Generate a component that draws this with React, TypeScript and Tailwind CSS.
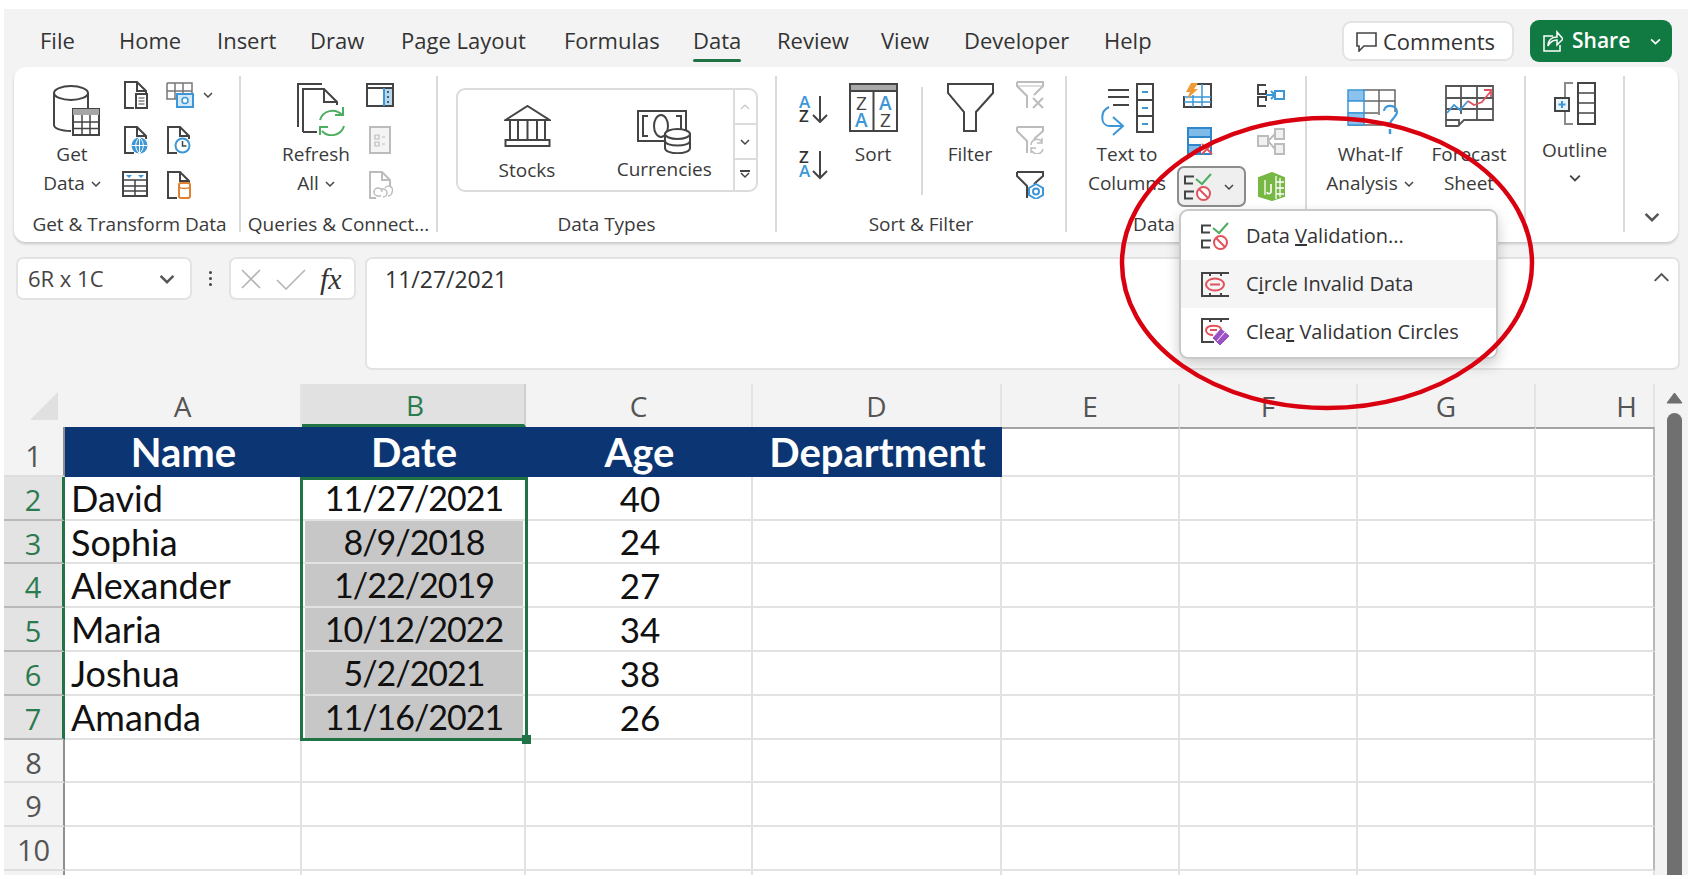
import React from 'react';

const DARK = '#444444';
const BLUE = '#3d96d6';
const GRAY = '#bcbcbc';
const RED = '#e2525c';
const GREEN = '#4cae5f';
const UI = "font-['Open_Sans',sans-serif]";

function Ico({ w, h, children, stroke = DARK, sw = 2 }: { w: number; h: number; children: React.ReactNode; stroke?: string; sw?: number }) {
  return (
    <svg width={w} height={h} viewBox={`0 0 ${w} ${h}`} fill="none" stroke={stroke} strokeWidth={sw} className="shrink-0">
      {children}
    </svg>
  );
}

function Chevron({ size = 10, color = '#444', up = false }: { size?: number; color?: string; up?: boolean }) {
  return (
    <svg width={size} height={size} viewBox="0 0 10 10" fill="none" stroke={color} strokeWidth={up ? 1.2 : 1.5} className="shrink-0">
      <path d={up ? 'M1 7l4-4 4 4' : 'M1 3l4 4 4-4'} />
    </svg>
  );
}

const DocBase = ({ c = DARK }: { c?: string }) => (
  <>
    <path d="M11 27H2V1h12l9 9v3" stroke={c} />
    <path d="M14 1v9h9" stroke={c} />
  </>
);

const GetDataIcon = () => (
  <Ico w={48} h={52}>
    <ellipse cx="19" cy="9" rx="17" ry="7" />
    <path d="M2 9v32c0 3 6 6 17 6M36 9v15" />
    <rect x="21" y="25" width="26" height="26" fill="#fff" />
    <rect x="21" y="25" width="26" height="6" fill="#a6a6a6" stroke="none" />
    <path d="M21 38h26M21 44.500h26M30 31v20M38 31v20" strokeWidth="1.500" />
  </Ico>
);
const FromTextIcon = () => (
  <Ico w={25} h={28}>
    <DocBase />
    <rect x="13" y="13" width="11" height="14" fill="#fff" />
    <path d="M15.500 17h6M15.500 20h6M15.500 23h6" strokeWidth="1.200" />
  </Ico>
);
const PictureIcon = () => (
  <Ico w={28} h={26} stroke="#777" sw={1.5}>
    <path d="M1 1h25v10M1 1v16h9M1 9h25M9 1v16M17 1v10" />
    <rect x="11" y="12" width="16" height="13" stroke={BLUE} fill="#d5e9f7" strokeWidth="2" />
    <circle cx="19" cy="18.500" r="3" stroke={BLUE} fill="#fff" strokeWidth="1.500" />
  </Ico>
);
const WebIcon = () => (
  <Ico w={25} h={28}>
    <DocBase />
    <circle cx="16.500" cy="19.500" r="8" fill={BLUE} stroke="none" />
    <path d="M8.500 19.500h16M16.500 11.500v16M16.500 11.500c-5 4-5 12 0 16M16.500 11.500c5 4 5 12 0 16" stroke="#fff" strokeWidth="1" />
  </Ico>
);
const RecentIcon = () => (
  <Ico w={25} h={28}>
    <DocBase />
    <circle cx="16.500" cy="19.500" r="7" fill="#fff" stroke={BLUE} />
    <path d="M16.500 15v5h4" strokeWidth="1.500" />
  </Ico>
);
const TableIcon = () => (
  <Ico w={26} h={26}>
    <rect x="1" y="1" width="24" height="24" />
    <path d="M1 9h24M1 15h24M1 20h24M13 9v16" strokeWidth="1.500" />
    <path d="M4 4h6l-3 3zM16 4h6l-3 3z" fill={BLUE} stroke="none" />
  </Ico>
);
const ExistingIcon = () => (
  <Ico w={25} h={28}>
    <DocBase />
    <rect x="13" y="12" width="11" height="15" rx="2" fill="#fff" stroke="#e0812f" />
    <path d="M13 16c2 2 9 2 11 0" stroke="#e0812f" strokeWidth="1.500" />
  </Ico>
);
const RefreshIcon = () => (
  <Ico w={49} h={53}>
    <path d="M1 44V1h24M6 49V6h21l13 13v3M27 6v13h13M6 49h14" />
    <path d="M23 37a13 13 0 0 1 22-5M47 43a13 13 0 0 1-22 5" stroke={GREEN} fill="#fff" />
    <path d="M46 24v8h-8M23 52v-8h8" stroke={GREEN} />
  </Ico>
);
const QueriesIcon = () => (
  <Ico w={28} h={24}>
    <rect x="1" y="1" width="26" height="22" />
    <path d="M1 5h26" />
    <rect x="18" y="6" width="8" height="16" fill="#b6d9f2" stroke="none" />
    <path d="M18 5v18" stroke={BLUE} />
    <path d="M22 8v2M22 13v2M22 18v2" stroke="#333" strokeWidth="1.500" />
  </Ico>
);
const PropsIcon = () => (
  <Ico w={22} h={28} stroke={GRAY}>
    <rect x="1" y="1" width="20" height="26" fill="#f4f4f4" />
    <path d="M6 9h4v4H6zM6 16h4v4H6zM13 11h3M13 18h3" strokeWidth="1.200" />
  </Ico>
);
const EditLinksIcon = () => (
  <Ico w={25} h={28} stroke={GRAY}>
    <path d="M8 27H2V1h12l8 8v6M14 1v8h8" />
    <path d="M14 21a4 4 0 0 0-8 0 4 4 0 0 0 4 4h3M12 18h3a4 4 0 0 1 0 8M17 17a4 4 0 0 1 7 4 4 4 0 0 1-4 4" strokeWidth="1.500" />
  </Ico>
);
const BankIcon = () => (
  <Ico w={47} h={42}>
    <path d="M1.500 15L23.500 1l22 14z" />
    <path d="M6 15v20M14 15v20M23.500 15v20M33 15v20M41 15v20" />
    <rect x="1.500" y="35" width="44" height="6" fill="#fff" />
  </Ico>
);
const CurrencyIcon = () => (
  <Ico w={54} h={44}>
    <rect x="1" y="1" width="48" height="30" />
    <path d="M11 6H6v20h5M39 6h5v20h-5" />
    <ellipse cx="24" cy="16" rx="7" ry="11" />
    <path d="M28 24v14c0 7 25 7 25 0V24z" fill="#fff" />
    <ellipse cx="40.500" cy="24" rx="12.500" ry="5" fill="#fff" />
    <path d="M28 31c0 6 25 6 25 0" />
  </Ico>
);
const SortLetters = ({ top, bottom, topC, botC }: { top: string; bottom: string; topC: string; botC: string }) => (
  <>
    <text x="0" y="13" fontFamily="Open Sans" fontSize="17" fontWeight="600" fill={topC} stroke="none">{top}</text>
    <text x="0" y="27" fontFamily="Open Sans" fontSize="17" fontWeight="600" fill={botC} stroke="none">{bottom}</text>
  </>
);
const SortAZ = () => (
  <Ico w={29} h={28}>
    <SortLetters top="A" bottom="Z" topC={BLUE} botC="#333" />
    <path d="M21 1v26M14 20l7 7 7-7" />
  </Ico>
);
const SortZA = () => (
  <Ico w={29} h={30}>
    <SortLetters top="Z" bottom="A" topC="#333" botC={BLUE} />
    <path d="M21 1v27M14 21l7 7 7-7" />
  </Ico>
);
const SortIcon = () => (
  <Ico w={49} h={49}>
    <rect x="1" y="1" width="47" height="47" />
    <rect x="1" y="1" width="47" height="7" fill="#a9a9a9" />
    <path d="M24.500 8v40" />
    <text x="7" y="27" fontFamily="Open Sans" fontSize="19" fill="#444" stroke="none">Z</text>
    <text x="6" y="44" fontFamily="Open Sans" fontSize="19" fontWeight="600" fill={BLUE} stroke="none">A</text>
    <text x="30" y="27" fontFamily="Open Sans" fontSize="19" fontWeight="600" fill={BLUE} stroke="none">A</text>
    <text x="31" y="44" fontFamily="Open Sans" fontSize="19" fill="#444" stroke="none">Z</text>
  </Ico>
);
const FilterIcon = () => (
  <Ico w={47} h={49}>
    <path d="M1 1h45v9L29 29v19H17V29L1 10z" />
  </Ico>
);
const ClearFilter = () => (
  <Ico w={29} h={28} stroke={GRAY}>
    <path d="M1 1h26v4L18 14M1 1v4l10 10v12" />
    <path d="M1 5h26" strokeWidth="1" />
    <path d="M17 17l10 10M27 17L17 27" />
  </Ico>
);
const ReapplyFilter = () => (
  <Ico w={29} h={28} stroke={GRAY}>
    <path d="M1 1h26v4l-9 8M1 1v4l10 10v12" />
    <path d="M15 19a6 6 0 0 1 11-3M27 23a6 6 0 0 1-11 2M26 12v5h-5M15 27v-5h5" strokeWidth="1.500" />
  </Ico>
);
const AdvancedFilter = () => (
  <Ico w={29} h={28}>
    <path d="M1 1h26v4l-9 8M1 1v4l10 10v12" />
    <path d="M20 13l7 4v7l-7 4-7-4v-7z" stroke={BLUE} fill="#fff" />
    <circle cx="20" cy="20.500" r="3" stroke={BLUE} />
  </Ico>
);
const TextColumnsIcon = () => (
  <Ico w={53} h={53}>
    <path d="M7 7h21M7 14h21M12 22h16" />
    <rect x="36" y="1" width="16" height="48" />
    <path d="M36 17h16M36 33h16" />
    <path d="M41 9h6M41 25h6M41 41h6" stroke={BLUE} />
    <path d="M8 24C-1 28-1 42 8 43h13M12 34l10 9-10 9" stroke={BLUE} />
  </Ico>
);
const FlashIcon = () => (
  <Ico w={29} h={25}>
    <path d="M12 1h16v23H1V13" />
    <path d="M1 14h27M1 19h27M10 12v12M19 1v23" stroke={BLUE} strokeWidth="1.500" />
    <path d="M8 0h7l-4 6h4L4 16l3-7H3z" fill="#ef9a32" stroke="none" />
  </Ico>
);
const DuplicatesIcon = () => (
  <Ico w={27} h={28} stroke="#2f86c9">
    <rect x="1" y="1" width="23" height="26" />
    <rect x="1" y="1" width="23" height="9" fill="#7fbbe8" />
    <rect x="1" y="18" width="12" height="9" fill="#7fbbe8" />
    <path d="M15 17l10 10M25 17L15 27" stroke="#e2525c" />
  </Ico>
);
const ValidationIcon = () => (
  <Ico w={28} h={29}>
    <path d="M10 4.500H1v7h8M10 19.500H1v7h8" />
    <path d="M12 7l6 5 9-10" stroke={GREEN} />
    <circle cx="19.500" cy="21.500" r="6.500" stroke={RED} fill="#fff" />
    <path d="M15 17l9 9" stroke={RED} />
  </Ico>
);
const CircleInvalidIcon = () => (
  <Ico w={28} h={25}>
    <path d="M0 1h28M0 24h28M1 1v23M9 1v3M20 1v3M9 21v3M20 21v3" />
    <ellipse cx="14" cy="12.500" rx="9" ry="6" stroke={RED} />
    <path d="M9 12.500h10" stroke={RED} />
  </Ico>
);
const ClearCirclesIcon = () => (
  <Ico w={28} h={28}>
    <path d="M0 1h28M0 24h13M1 1v23M9 1v3M20 1v3" />
    <path d="M20 11c-1-4-14-5-15 1 0 3 3 5 7 5" stroke={RED} />
    <path d="M9 12h7" stroke={RED} />
    <path d="M20 11l8 7-9 9-7-7z" fill="#9b50c4" stroke="#9b50c4" strokeWidth="1" />
    <path d="M24 14l-8 9" stroke="#fff" strokeWidth="1" />
  </Ico>
);
const ConsolidateIcon = () => (
  <Ico w={28} h={23}>
    <path d="M9 1H1v9h8V6M9 22H1v-9h8v4" />
    <path d="M9 11h9M14 7l4 4-4 4" stroke={BLUE} />
    <rect x="18" y="7" width="9" height="8" stroke={BLUE} />
  </Ico>
);
const RelationshipsIcon = () => (
  <Ico w={28} h={27} stroke={GRAY}>
    <rect x="1" y="8" width="10" height="10" fill="#f1f1f1" />
    <rect x="18" y="1" width="9" height="10" fill="#f1f1f1" />
    <rect x="18" y="16" width="9" height="10" fill="#f1f1f1" />
    <path d="M11 13l7-7M11 13l7 8" />
  </Ico>
);
const DataModelIcon = () => (
  <Ico w={28} h={29} stroke="#76b843">
    <path d="M2 6l13-5 12 5v18l-12 4-13-4z" fill="#76b843" />
    <path d="M8 8v15M19 4v23M19 10h8M19 16h8M19 22h8M23 6v19" stroke="#fff" strokeWidth="1.300" />
    <path d="M14 12v7a2 2 0 0 1-4 1" stroke="#fff" strokeWidth="1.600" />
  </Ico>
);
const WhatIfIcon = () => (
  <Ico w={53} h={47} stroke="#666" sw={1.5}>
    <path d="M16 1h32v22M1 36h34M32 1v25M16 1v35M1 12h47M1 24h30" />
    <rect x="1" y="1" width="16" height="11" fill="#8cc3ee" stroke={BLUE} />
    <rect x="1" y="12" width="16" height="12" fill="#fff" stroke={BLUE} />
    <rect x="1" y="24" width="16" height="12" fill="#8cc3ee" stroke={BLUE} />
    <path d="M37 22c0-7 13-7 13 1 0 6-7 6-7 13" stroke={BLUE} strokeWidth="2.200" />
    <path d="M43 40v5" stroke={BLUE} strokeWidth="2.500" />
  </Ico>
);
const ForecastIcon = () => (
  <Ico w={49} h={42} stroke="#555" sw={1.8}>
    <path d="M1 1h47v34H19l-6 6H1zM1 13h47M1 24h47M16 1v28M32 1v34M1 35h13v6" />
    <path d="M2 28l7-8 6 5 8-9" stroke={BLUE} fill="none" />
    <path d="M23 16l6 4 8-3 9-11M39 5h7v7" stroke="#e0525c" fill="none" />
  </Ico>
);
const OutlineIcon = () => (
  <Ico w={42} h={43}>
    <path d="M19 1h-8v14M11 28v14h8" stroke="#8a8a8a" />
    <rect x="1" y="16" width="14" height="13" stroke="#444" fill="#eaf4fb" />
    <path d="M8 19v7M4.500 22.500h7" stroke={BLUE} />
    <rect x="24" y="1" width="17" height="41" />
    <path d="M24 11h17M24 21h17M24 31h17" strokeWidth="1.500" />
  </Ico>
);

function Large({ icon, lines, box = 'items-end', w }: { icon: React.ReactNode; lines: React.ReactNode[]; box?: string; w: string }) {
  return (
    <div className={`flex flex-col items-center pt-[7px] ${w}`}>
      <div className={`flex h-[53px] justify-center ${box}`}>{icon}</div>
      <div className="mt-[4px] text-center leading-[29px] whitespace-nowrap">
        {lines.map((l, i) => (
          <div key={i} className="flex items-center justify-center gap-[6px]">{l}</div>
        ))}
      </div>
    </div>
  );
}

function SmallCol({ children, className = '' }: { children: React.ReactNode; className?: string }) {
  return <div className={`flex flex-col gap-[17px] pt-[5px] ${className}`}>{children}</div>;
}

function Group({ label, className, children, labelClass = '' }: { label?: string; className: string; children: React.ReactNode; labelClass?: string }) {
  return (
    <div className={`flex h-[156px] shrink-0 flex-col border-r-2 border-[#dadada] ${className}`}>
      <div className="flex min-h-0 flex-1">{children}</div>
      {label && <div className={`h-[14px] whitespace-nowrap text-center leading-[12px] ${labelClass}`}>{label}</div>}
    </div>
  );
}

function Cell28({ children }: { children: React.ReactNode }) {
  return <div className="flex h-[28px] items-center justify-center">{children}</div>;
}

const tabs = [
  ['File', 'w-[79px]'],
  ['Home', 'w-[98px]'],
  ['Insert', 'w-[93px]'],
  ['Draw', 'w-[91px]'],
  ['Page Layout', 'w-[163px]'],
  ['Formulas', 'w-[129px]'],
  ['Data', 'w-[84px]'],
  ['Review', 'w-[104px]'],
  ['View', 'w-[83px]'],
  ['Developer', 'w-[140px]'],
  ['Help', 'w-[70px]'],
];

function TabBar() {
  return (
    <div className="flex h-[58px] items-start pl-[36px]">
      {tabs.map(([t, w]) => (
        <div key={t} className={`relative h-[54px] pt-[18px] text-[22px] leading-[26px] text-[#333] ${w}`}>
          {t}
          {t === 'Data' && <div className="absolute left-0 top-[50px] h-[3px] w-[48px] rounded-full bg-[#217346]" />}
        </div>
      ))}
      <div className="ml-auto mt-[12px] flex h-[40px] w-[172px] items-center gap-[6px] rounded-[9px] border-2 border-[#e3e3e3] bg-white pl-[12px] text-[22px] text-[#333]">
        <Ico w={21} h={21} sw={1.6}>
          <path d="M1 2h19v13H8l-5 5v-5H1z" />
        </Ico>
        Comments
      </div>
      <div className="ml-[16px] mr-[16px] mt-[11px] flex h-[42px] w-[142px] items-center rounded-[9px] bg-[#117a43] pl-[13px] text-[21px] font-semibold text-white">
        <Ico w={20} h={22} stroke="#fff" sw={1.5}>
          <path d="M10 6H1v15h16v-6M5 16c0-6 4-9 9-9V2l6 7-6 6v-5c-4 0-7 2-9 6z" />
        </Ico>
        <span className="ml-[9px]">Share</span>
        <span className="ml-[20px]">
          <Chevron size={11} color="#fff" />
        </span>
      </div>
    </div>
  );
}

function Ribbon() {
  return (
    <div className="ml-[10px] flex h-[175px] w-[1664px] rounded-[12px] bg-white pt-[9px] text-[19px] text-[#3a3a3a] shadow-[0_2px_3px_rgba(0,0,0,0.18)]">
      <Group label="Get & Transform Data" className="w-[227px]" labelClass="pl-[6px]">
        <Large
          w="ml-[16px] w-[84px]"
          icon={<span className="pl-[8px]"><GetDataIcon /></span>}
          lines={['Get', <>Data <Chevron /></>]}
        />
        <SmallCol className="ml-[5px] w-[32px] items-center">
          <FromTextIcon />
          <WebIcon />
          <TableIcon />
        </SmallCol>
        <SmallCol className="ml-[15px] w-[50px] items-start">
          <div className="flex h-[28px] items-center gap-[9px]">
            <PictureIcon />
            <Chevron />
          </div>
          <RecentIcon />
          <ExistingIcon />
        </SmallCol>
      </Group>

      <Group label="Queries & Connect..." className="w-[197px]">
        <Large
          w="ml-[35px] w-[80px]"
          icon={<span className="pl-[10px]"><RefreshIcon /></span>}
          lines={['Refresh', <>All <Chevron /></>]}
        />
        <SmallCol className="ml-[10px] w-[28px] items-center">
          <Cell28><QueriesIcon /></Cell28>
          <PropsIcon />
          <EditLinksIcon />
        </SmallCol>
      </Group>

      <Group label="Data Types" className="w-[339px]">
        <div className="ml-[18px] mt-[12px] flex h-[104px] w-[302px] rounded-[9px] border-2 border-[#dcdcdc]">
          <div className="flex w-[92px] flex-col items-center pl-[46px]">
            <div className="flex w-[92px] shrink-0 flex-col items-center pt-[15px]">
              <BankIcon />
              <div className="mt-[10px] leading-[26px]">Stocks</div>
            </div>
          </div>
          <div className="ml-[46px] flex w-[140px] flex-col items-center pt-[20px]">
            <CurrencyIcon />
            <div className="mt-[2px] leading-[26px]">Currencies</div>
          </div>
          <div className="ml-auto flex w-[24px] flex-col divide-y-2 divide-[#dcdcdc] border-l-2 border-[#dcdcdc]">
            <div className="flex h-[35px] items-center justify-center"><Chevron up color="#c4c4c4" /></div>
            <div className="flex h-[35px] items-center justify-center"><Chevron /></div>
            <div className="flex flex-1 flex-col items-center justify-center">
              <div className="mb-[-2px] h-[1.500px] w-[10px] bg-[#444]" />
              <Chevron />
            </div>
          </div>
        </div>
      </Group>

      <Group label="Sort & Filter" className="w-[290px]">
        <div className="ml-[22px] flex flex-col gap-[27px] pt-[19px]">
          <SortAZ />
          <SortZA />
        </div>
        <Large w="ml-[10px] w-[70px]" icon={<SortIcon />} box="items-start" lines={['Sort']} />
        <div className="ml-[13px] mt-[11px] h-[108px] w-[2px] bg-[#dadada]" />
        <Large w="ml-[12px] w-[70px]" icon={<FilterIcon />} box="items-start" lines={['Filter']} />
        <SmallCol className="ml-[11px]">
          <ClearFilter />
          <ReapplyFilter />
          <AdvancedFilter />
        </SmallCol>
      </Group>

      <Group label="Data Tools" className="w-[240px]" labelClass="pr-[12px]">
        <Large w="ml-[15px] w-[90px]" icon={<TextColumnsIcon />} lines={['Text to', 'Columns']} />
        <div className="ml-[5px] flex flex-col pt-[5px]">
          <div className="flex h-[28px] items-center pl-[6px]">
            <FlashIcon />
            <span className="ml-[45px]"><ConsolidateIcon /></span>
          </div>
          <div className="mt-[18px] flex h-[28px] items-center pl-[10px]">
            <DuplicatesIcon />
            <span className="ml-[43px]"><RelationshipsIcon /></span>
          </div>
          <div className="mt-[11px] flex items-center">
            <div className="flex h-[41px] w-[69px] items-center gap-[12px] rounded-[7px] border-2 border-[#8c8c8c] bg-[#efefef] pl-[5px]">
              <ValidationIcon />
              <Chevron />
            </div>
            <span className="ml-[11px]"><DataModelIcon /></span>
          </div>
        </div>
      </Group>

      <Group className="w-[219px]">
        <Large
          w="ml-[13px] w-[100px]"
          icon={<span className="pl-[6px]"><WhatIfIcon /></span>}
          lines={['What-If', <>Analysis <Chevron /></>]}
        />
        <Large w="ml-[4px] w-[90px]" icon={<ForecastIcon />} box="items-start pt-[2px]" lines={['Forecast', 'Sheet']} />
      </Group>

      <Group className="w-[99px]">
        <div className="flex w-full flex-col items-center pt-[6px]">
          <OutlineIcon />
          <div className="mt-[11px] leading-[29px]">Outline</div>
          <div className="mt-[7px]"><Chevron size={12} /></div>
        </div>
      </Group>

      <div className="flex h-[156px] flex-1 items-end justify-center pb-[7px]">
        <Chevron size={16} color="#555" />
      </div>
    </div>
  );
}

function FormulaBar() {
  return (
    <div className="ml-[12px] mt-[15px] flex items-start text-[22px] text-[#444]">
      <div className="flex h-[43px] w-[176px] items-center justify-between rounded-[7px] border-2 border-[#e3e3e3] bg-white pl-[10px] pr-[15px]">
        6R x 1C
        <Chevron size={16} color="#555" />
      </div>
      <div className="flex h-[43px] w-[37px] flex-col items-center justify-center gap-[3px]">
        <div className="h-[3px] w-[3px] rounded-full bg-[#444]" />
        <div className="h-[3px] w-[3px] rounded-full bg-[#444]" />
        <div className="h-[3px] w-[3px] rounded-full bg-[#444]" />
      </div>
      <div className="flex h-[43px] w-[127px] items-center gap-[14px] rounded-[7px] border-2 border-[#e3e3e3] bg-white pl-[9px]">
        <Ico w={22} h={22} stroke="#b5b5b5" sw={1.6}>
          <path d="M2 2l18 18M20 2L2 20" />
        </Ico>
        <Ico w={30} h={22} stroke="#b5b5b5" sw={1.6}>
          <path d="M1 12l9 9L29 2" />
        </Ico>
        <span className="font-['Liberation_Serif',serif] text-[30px] italic leading-none text-[#333]">fx</span>
      </div>
      <div className="relative ml-[9px] h-[113px] w-[1315px] rounded-[7px] border-2 border-[#e3e3e3] bg-white pl-[18px] pt-[3px] text-[23px] text-[#333]">
        11/27/2021
        <span className="absolute right-[8px] top-[10px]"><Chevron size={17} color="#555" up /></span>
      </div>
    </div>
  );
}

const columns = ['A', 'B', 'C', 'D', 'E', 'F', 'G', 'H'];
const rows: [string, string, string][] = [
  ['David', '11/27/2021', '40'],
  ['Sophia', '8/9/2018', '24'],
  ['Alexander', '1/22/2019', '27'],
  ['Maria', '10/12/2022', '34'],
  ['Joshua', '5/2/2021', '38'],
  ['Amanda', '11/16/2021', '26'],
];
const CELL = "font-['Lato',sans-serif] text-[#111] leading-none";

function Blank({ last = false, first = false }: { last?: boolean; first?: boolean }) {
  return (
    <div
      className={`border-b-2 bg-white ${last ? 'border-r-2 border-b-[#e2e2e2] border-r-[#b8b8b8]' : 'border-r-2 border-[#e2e2e2]'} ${
        first ? 'border-t-2 border-t-[#a3a3a3]' : ''
      }`}
    />
  );
}

function RowHead({ n, active = false }: { n: number; active?: boolean }) {
  return (
    <div
      className={`flex items-center justify-center pt-[3px] text-[29px] leading-none ${
        active
          ? 'border-b-2 border-r-[3px] border-b-[#b9b9b9] border-r-[#217346] bg-[#e3e3e3] text-[#2c7a50]'
          : 'border-b-2 border-r-2 border-b-[#dedede] border-r-[#8f8f8f] text-[#555]'
      } ${n === 1 ? 'pt-[9px]' : ''}`}
    >
      {n}
    </div>
  );
}

function Sheet() {
  return (
    <div className="mt-[14px] flex h-[491px]">
      <div className="relative grid grid-cols-[61px_237px_224px_227px_249px_178px_178px_178px_119px] grid-rows-[43px_50px_44px_43px_44px_44px_44px_44px_43px_44px_44px_4px]">
        {/* Column headers */}
        <div className="relative">
          <div className="absolute left-[26px] top-[8px] h-0 w-0 border-b-[28px] border-l-[28px] border-b-[#e0e0e0] border-l-transparent" />
        </div>
        {columns.map((c) => (
          <div
            key={c}
            className={`flex items-center justify-center text-[28px] leading-none ${
              c === 'B'
                ? 'border-b-[3px] border-r-2 border-b-[#217346] border-r-[#cfcfcf] bg-[#e1e1e1] pl-[4px] pt-[2px] text-[#2c7a50]'
                : 'border-r-2 border-[#e4e4e4] text-[#555]'
            }`}
          >
            {c === 'H' ? <span className="pl-[64px]">{c}</span> : c}
          </div>
        ))}

        {/* Row 1 */}
        <RowHead n={1} />
        {['Name', 'Date', 'Age', 'Department'].map((h) => (
          <div key={h} className="flex items-center justify-center bg-[#0b3673] font-['Lato',sans-serif] text-[40px] font-bold leading-none text-white">
            {h}
          </div>
        ))}
        <Blank first />
        <Blank first />
        <Blank first />
        <Blank first last />

        {/* Data rows */}
        {rows.map(([name, date, age], i) => (
          <React.Fragment key={name}>
            <RowHead n={i + 2} active />
            <div className={`flex items-center border-b-2 border-r-2 border-[#e2e2e2] bg-white pl-[6px] text-[36px] ${CELL}`}>{name}</div>
            <div className="border-b-2 border-[#e2e2e2] bg-white">
              <div className={`mx-[3px] flex h-full items-center justify-center text-[34px] tracking-[-1px] ${CELL} ${i > 0 ? 'bg-[#c7c7c7]' : ''}`}>{date}</div>
            </div>
            <div className={`flex items-center justify-center border-b-2 border-r-2 border-[#e2e2e2] bg-white pl-[3px] text-[35px] ${CELL}`}>{age}</div>
            <Blank />
            <Blank />
            <Blank />
            <Blank />
            <Blank last />
          </React.Fragment>
        ))}

        {/* Empty rows */}
        {[8, 9, 10].map((n) => (
          <React.Fragment key={n}>
            <RowHead n={n} />
            {columns.map((c) => (
              <Blank key={c} last={c === 'H'} />
            ))}
          </React.Fragment>
        ))}
        <div className="border-r-2 border-r-[#8f8f8f]" />
        {columns.map((c) => (
          <div key={c} className="border-r-2 border-[#e2e2e2] bg-white" />
        ))}

        {/* Selection */}
        <div className="pointer-events-none absolute left-[296px] top-[93px] h-[264px] w-[228px] border-[3px] border-[#217346]">
          <div className="absolute bottom-[-6px] right-[-6px] h-[9px] w-[9px] bg-[#217346]" />
        </div>
      </div>

      {/* Scrollbar */}
      <div className="ml-[11px] flex w-[17px] flex-col items-center pt-[8px]">
        <svg width="17" height="12" viewBox="0 0 17 12" className="shrink-0">
          <path d="M8.500 1L16 11H1z" fill="#6e6e6e" stroke="#6e6e6e" strokeLinejoin="round" />
        </svg>
        <div className="mt-[9px] w-[15px] flex-1 rounded-t-full bg-[#707070]" />
      </div>
    </div>
  );
}

function ValidationMenu() {
  return (
    <div className="absolute left-[1175px] top-[200px] flex h-[150px] w-[319px] flex-col rounded-[9px] border-2 border-[#c9c9c9] bg-white py-[1px] text-[20px] text-[#333] shadow-[0_6px_14px_rgba(0,0,0,0.2)]">
      <div className="flex h-[48px] items-center pl-[20px]">
        <span className="flex w-[45px]"><ValidationIcon /></span>
        <span>Data <span className="underline">V</span>alidation...</span>
      </div>
      <div className="flex h-[49px] items-center bg-[#f5f5f5] pl-[20px]">
        <span className="flex w-[45px]"><CircleInvalidIcon /></span>
        <span>C<span className="underline">i</span>rcle Invalid Data</span>
      </div>
      <div className="flex h-[48px] items-center pl-[20px]">
        <span className="flex w-[45px]"><ClearCirclesIcon /></span>
        <span>Clea<span className="underline">r</span> Validation Circles</span>
      </div>
    </div>
  );
}

export default function App() {
  return (
    <div className={`h-[879px] w-[1693px] overflow-hidden bg-white pl-[4px] pt-[9px] ${UI}`}>
      <div className="relative h-[866px] w-[1684px] overflow-hidden bg-[#f3f3f3]">
        <TabBar />
        <Ribbon />
        <FormulaBar />
        <Sheet />
        <ValidationMenu />
        {/* Red annotation ellipse */}
        <svg width="420" height="300" viewBox="0 0 420 300" fill="none" className="pointer-events-none absolute left-[1113px] top-[104px]">
          <ellipse cx="210" cy="150" rx="205" ry="145" stroke="#d9000f" strokeWidth="4.500" />
        </svg>
      </div>
    </div>
  );
}
